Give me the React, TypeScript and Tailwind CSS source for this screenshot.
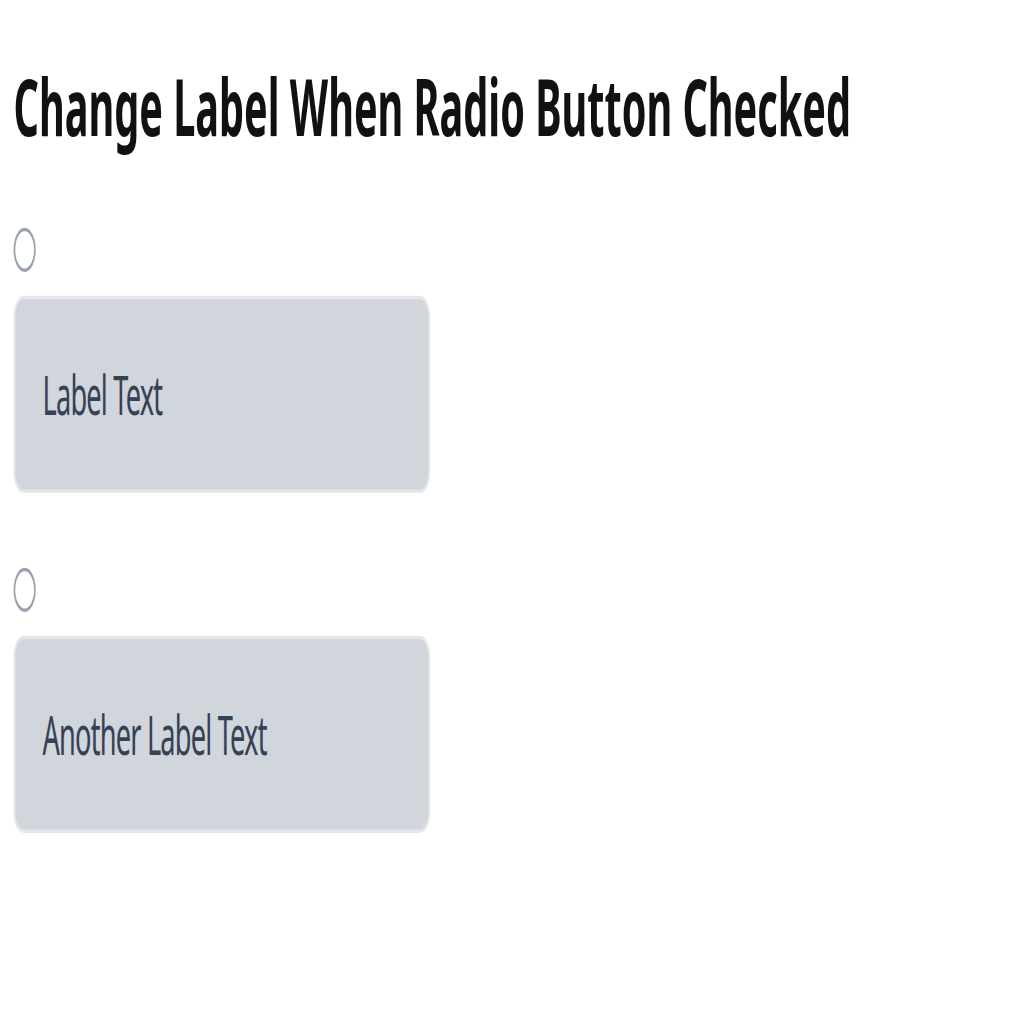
import React, { useState } from 'react';

const options = [
  { id: 'opt-1', text: 'Label Text' },
  { id: 'opt-2', text: 'Another Label Text' },
];

export default function App() {
  const [checked, setChecked] = useState<string | null>(null);

  return (
    <div className="w-[1024px] h-[1024px] overflow-hidden bg-white">
      {/* the reference is a small page stretched to fill the frame */}
      <div className="w-[600px] origin-top-left scale-x-[1.7] scale-y-[3.4] px-2 pt-[15px] font-['Noto_Sans',sans-serif] text-[#111]">
        <h2 className="text-[23.3px] leading-8 font-bold">Change Label When Radio Button Checked</h2>

        <div className="mt-[20px] flex flex-col gap-[22px]">
          {options.map((o) => (
            <div key={o.id} className="w-[245px]">
              <input
                id={o.id}
                type="radio"
                name="choice"
                className="block h-[13px] w-[13px] appearance-none rounded-full border border-gray-400 bg-white checked:border-[4px] checked:border-blue-600"
                checked={checked === o.id}
                onChange={() => setChecked(o.id)}
              />
              <label
                htmlFor={o.id}
                className={`mt-[7px] block rounded-md border border-gray-200 p-4 text-base tracking-[-0.03em] ${
                  checked === o.id ? 'bg-blue-500 text-white' : 'bg-gray-300 text-gray-700'
                }`}
              >
                {checked === o.id ? 'Checked!' : o.text}
              </label>
            </div>
          ))}
        </div>
      </div>
    </div>
  );
}
